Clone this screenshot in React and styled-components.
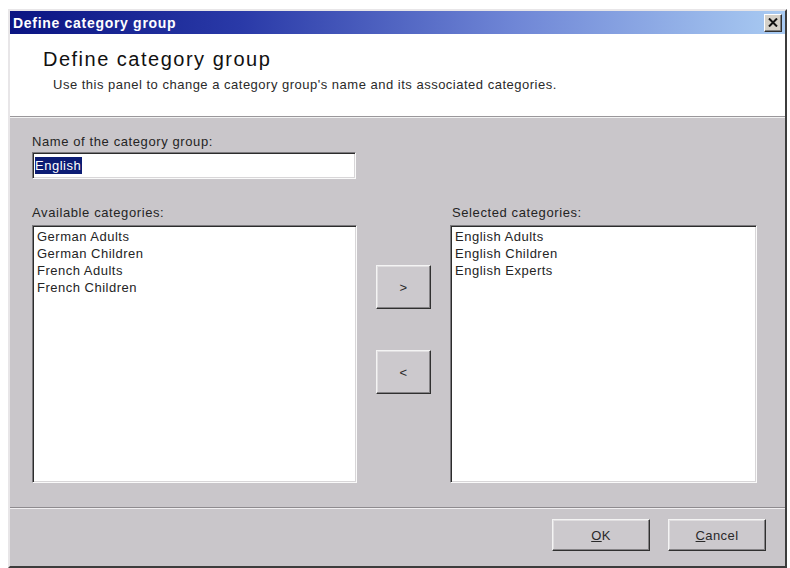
import React from "react";
import styled, { createGlobalStyle } from "styled-components";

const GlobalStyle = createGlobalStyle`
  html, body {
    margin: 0;
    background: #fff;
  }
  body {
    font-family: "Liberation Sans", Arial, sans-serif;
    color: #1a1a1a;
  }
`;

const Window = styled.div`
  margin: 9px 0 0 8px;
  width: 779px;
  box-sizing: border-box;
  display: flex;
  flex-direction: column;
  background: #c9c6ca;
  border: 2px solid;
  border-color: #e8e6e8 #3c3c3c #3c3c3c #e8e6e8;
`;

const TitleBar = styled.div`
  height: 23px;
  display: flex;
  align-items: center;
  justify-content: space-between;
  padding: 0 3px 0 3px;
  background: linear-gradient(to right, #0a1482 0%, #2a3aa8 30%, #6f86d6 65%, #a9cbf2 100%);
`;

const TitleText = styled.span`
  color: #fff;
  font-weight: bold;
  font-size: 14px;
  letter-spacing: 0.7px;
`;

const CloseButton = styled.button`
  width: 18px;
  height: 18px;
  padding: 0;
  display: grid;
  place-items: center;
  background: #d4d0c8;
  border: 1px solid;
  border-color: #fff #303030 #303030 #fff;
  box-shadow: inset -1px -1px #808080;
`;

const Header = styled.div`
  height: 83px;
  box-sizing: border-box;
  background: #fff;
  padding: 13px 0 0 33px;
  border-bottom: 1px solid #9a979b;
  box-shadow: 0 1px #f2f2f2;
`;

const Heading = styled.h1`
  margin: 0;
  font-size: 20px;
  line-height: 24px;
  font-weight: normal;
  letter-spacing: 1.5px;
  color: #111;
`;

const Subheading = styled.p`
  margin: 6px 0 0 10px;
  font-size: 13px;
  line-height: 16px;
  letter-spacing: 0.5px;
  color: #2a2a2a;
`;

const Body = styled.div`
  padding: 17px 28px 24px 22px;
`;

const Label = styled.div`
  font-size: 13px;
  line-height: 15px;
  letter-spacing: 0.6px;
  color: #242424;
  grid-column: ${({ $col }) => $col || "auto"};
  padding-left: ${({ $indent }) => $indent || 0}px;
`;

const sunken = `
  box-sizing: border-box;
  background: #fff;
  border: 1px solid;
  border-color: #7c7a7e #fafafa #fafafa #7c7a7e;
  box-shadow: inset 1px 1px #2c2c2c, inset -1px -1px #d8d6d8;
`;

const NameInput = styled.div`
  ${sunken}
  margin-top: 3px;
  width: 324px;
  height: 27px;
  padding: 3px 0 0 2px;
  font-size: 13px;
  line-height: 19px;
  letter-spacing: 0.5px;
`;

const Selection = styled.span`
  background: #0c1c74;
  color: #fff;
  padding: 1px 1px 1px 0;
`;

const Lists = styled.div`
  margin-top: 26px;
  display: grid;
  grid-template-columns: 325px 1fr 307px;
  grid-template-rows: 15px 258px;
  row-gap: 5px;
`;

const ListBox = styled.div`
  ${sunken}
  grid-row: 2;
  grid-column: ${({ $col }) => $col};
  padding: 2px 4px;
  font-size: 13px;
  line-height: 17px;
  letter-spacing: 0.5px;
  color: #242424;
`;

const MoveColumn = styled.div`
  grid-row: 2;
  grid-column: 2;
  display: flex;
  flex-direction: column;
  align-items: center;
  padding-top: 40px;
  gap: 41px;
`;

const PushButton = styled.button`
  box-sizing: border-box;
  width: ${({ $w }) => $w}px;
  height: ${({ $h }) => $h}px;
  padding: 0;
  background: #ccc9cd;
  border: 1px solid;
  border-color: #f4f4f4 #303030 #303030 #f4f4f4;
  box-shadow: inset -1px -1px #858386, inset 1px 1px #e0dee0;
  font-family: "Liberation Sans", Arial, sans-serif;
  font-size: 13px;
  letter-spacing: 0.4px;
  color: #2a2a2a;
`;

const Footer = styled.div`
  border-top: 1px solid #8e8b8f;
  box-shadow: inset 0 1px #f0eef0;
  padding: 11px 19px 15px 0;
  display: flex;
  justify-content: flex-end;
  gap: 18px;
`;

const available = ["German Adults", "German Children", "French Adults", "French Children"];
const selected = ["English Adults", "English Children", "English Experts"];

export default function App() {
  return (
    <>
      <GlobalStyle />
      <Window>
        <TitleBar>
          <TitleText>Define category group</TitleText>
          <CloseButton aria-label="Close">
            <svg width="10" height="9" viewBox="0 0 10 9">
              <path d="M1 0.5 L9 8.5 M9 0.5 L1 8.5" stroke="#111" strokeWidth="2" />
            </svg>
          </CloseButton>
        </TitleBar>

        <Header>
          <Heading>Define category group</Heading>
          <Subheading>
            Use this panel to change a category group's name and its associated categories.
          </Subheading>
        </Header>

        <Body>
          <Label>Name of the category group:</Label>
          <NameInput>
            <Selection>English</Selection>
          </NameInput>

          <Lists>
            <Label>Available categories:</Label>
            <Label $col={3} $indent={2}>Selected categories:</Label>
            <ListBox $col={1}>
              {available.map((c) => (
                <div key={c}>{c}</div>
              ))}
            </ListBox>
            <MoveColumn>
              <PushButton $w={55} $h={44}>&gt;</PushButton>
              <PushButton $w={55} $h={44}>&lt;</PushButton>
            </MoveColumn>
            <ListBox $col={3}>
              {selected.map((c) => (
                <div key={c}>{c}</div>
              ))}
            </ListBox>
          </Lists>
        </Body>

        <Footer>
          <PushButton $w={98} $h={32}>
            <u>O</u>K
          </PushButton>
          <PushButton $w={98} $h={32}>
            <u>C</u>ancel
          </PushButton>
        </Footer>
      </Window>
    </>
  );
}
